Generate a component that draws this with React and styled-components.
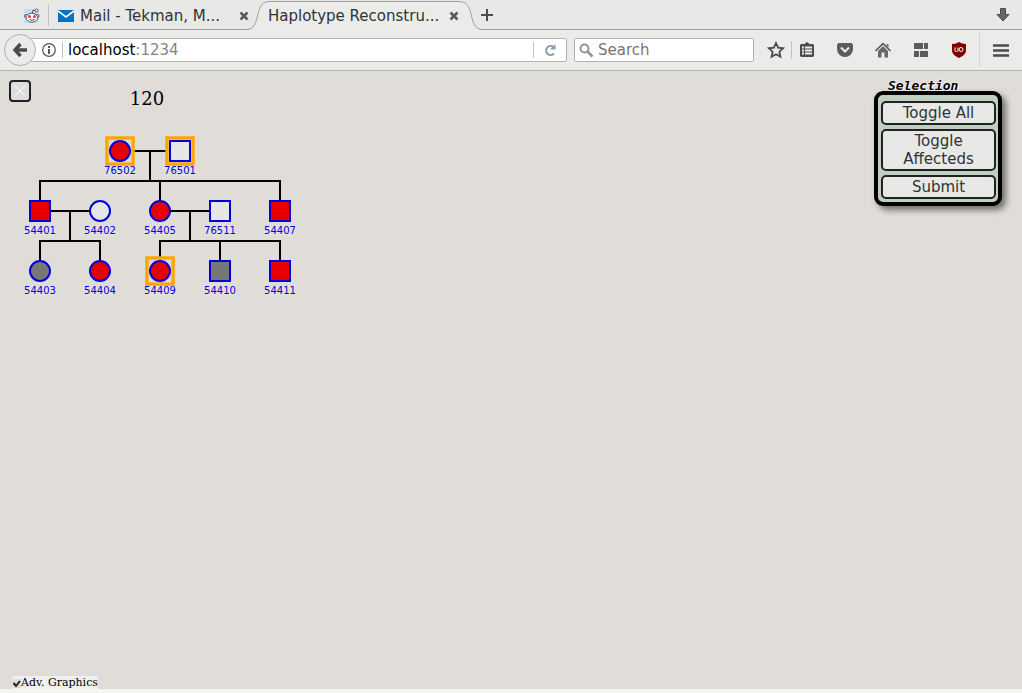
import React from "react";
import styled, { createGlobalStyle } from "styled-components";

const GlobalStyle = createGlobalStyle`
  *, *::before, *::after { box-sizing: border-box; }
  body { margin: 0; background: #e0ddd8; font-family: "DejaVu Sans", sans-serif; }
`;

const Browser = styled.div`
  display: flex;
  flex-direction: column;
  min-height: 100vh;
`;

const TabStrip = styled.header`
  display: flex;
  align-items: stretch;
  height: 30px;
  background: #e8e8e6;
  border-bottom: 1px solid #9c9f9a;
`;

const PinnedTab = styled.button`
  display: flex;
  align-items: center;
  width: 48px;
  padding: 2px 0 0 24px;
  border: 0;
  background: none;
`;

const Divider = styled.span`
  flex: none;
  align-self: center;
  width: 1px;
  height: ${(p) => p.$height || 18}px;
  background: #c4c4c1;
`;

const Tab = styled.div`
  display: flex;
  align-items: center;
  width: 208px;
  padding: 2px 8px 0 9px;
`;

const CurrentTab = styled.div`
  position: relative;
  display: flex;
  align-items: center;
  height: 30px;
  width: 210px;
  padding: 2px 8px 0 11px;
`;

const TabShape = styled.svg`
  position: absolute;
  left: -16px;
  top: 0;
`;

const TabTitle = styled.span`
  position: relative;
  flex: 1;
  font-size: 15px;
  line-height: 20px;
  white-space: nowrap;
  color: #2e3436;
`;

const TabIcon = styled.span`
  display: flex;
  width: 22px;
`;

const IconButton = styled.button`
  position: relative;
  display: flex;
  flex: none;
  align-items: center;
  justify-content: center;
  width: ${(p) => p.$width || 24}px;
  padding: 0;
  border: 0;
  background: none;
`;

const Spacer = styled.span`
  flex: 1;
`;

const Toolbar = styled.nav`
  display: flex;
  align-items: center;
  height: 41px;
  padding: 0 0 0 4px;
  background: #ebebea;
  border-bottom: 1px solid #b4b4ae;
`;

const BackButton = styled.button`
  position: relative;
  z-index: 1;
  display: flex;
  flex: none;
  align-items: center;
  justify-content: center;
  width: 32px;
  height: 32px;
  padding: 0;
  border: 1px solid #b0b0ac;
  border-radius: 50%;
  background: #ebebea;
`;

const Field = styled.div`
  display: flex;
  align-items: center;
  height: 24px;
  border: 1px solid #b4b4ae;
  border-radius: 2px;
  background: #fff;
`;

const AddressField = styled(Field)`
  flex: 1;
  margin-left: -6px;
  padding-left: 5px;
`;

const SearchField = styled(Field)`
  flex: none;
  width: 180px;
  margin: 0 7px;
  padding-left: 4px;
  gap: 4px;
`;

const Address = styled.a`
  flex: 1;
  padding-left: 5px;
  font-size: 15px;
  line-height: 20px;
  color: #858585;
  text-decoration: none;
`;

const Host = styled.span`
  color: #000;
`;

const SearchInput = styled.input`
  flex: 1;
  min-width: 0;
  padding: 0;
  border: 0;
  outline: 0;
  background: none;
  font: 15px/20px "DejaVu Sans", sans-serif;
  color: #000;
  &::placeholder { color: #757575; opacity: 1; }
`;

const Tools = styled.div`
  display: flex;
  align-items: center;
`;

const MenuSlot = styled.div`
  display: flex;
  justify-content: center;
  width: 43px;
  margin-left: 5px;
  border-left: 1px solid #d2d2cf;
  height: 34px;
`;

const Page = styled.main`
  display: flex;
  flex: 1;
  align-items: flex-start;
  padding: 9px 20px 0 9px;
`;

const CloseButton = styled.button`
  display: flex;
  flex: none;
  align-items: center;
  justify-content: center;
  width: 22px;
  height: 22px;
  padding: 0;
  border: 2px solid #222;
  border-radius: 4px;
  background: #ddd;
`;

const Chart = styled.svg`
  flex: none;
  margin-left: -31px;
  pointer-events: none;
`;

const Selection = styled.section`
  display: flex;
  flex-direction: column;
  flex: none;
  width: 128px;
  margin-left: auto;
`;

const PanelTitle = styled.h2`
  margin: 0 0 0 14px;
  font: italic bold 13px/11px "DejaVu Sans Mono", monospace;
  color: #000;
  text-shadow: 0 0 2px #fff, 1px 1px 1px #fff;
`;

const Panel = styled.div`
  display: flex;
  flex-direction: column;
  gap: 4px;
  padding: 6px 2px 3px 3px;
  border: 4px solid #000;
  border-radius: 9px;
  background: #bfcfc1;
  box-shadow: 4px 4px 6px rgba(0, 0, 0, 0.5);
`;

const PanelButton = styled.button`
  padding: 1px 8px;
  border: 2px solid #222;
  border-radius: 5px;
  background: #e8e8e6;
  font: 15px/18px "DejaVu Sans", sans-serif;
  color: #2e3436;
`;

const Footer = styled.footer`
  display: flex;
  padding: 0 12px;
  border-bottom: 4px solid #f6f4f0;
`;

const Option = styled.label`
  display: flex;
  align-items: center;
  padding-top: 1px;
  border-radius: 3px 3px 0 0;
  background: #f0f0ee;
  font: 11px/12px "DejaVu Serif", serif;
  color: #000;
`;

const Check = styled.input`
  appearance: none;
  width: 9px;
  height: 9px;
  margin: 0;
  background: #ddd;
  &:checked {
    background: #ddd url("data:image/svg+xml,%3Csvg xmlns='http://www.w3.org/2000/svg' viewBox='0 0 9 9'%3E%3Cpath d='M1.5 4l2.5 3 4-5' fill='none' stroke='%23222' stroke-width='2'/%3E%3C/svg%3E");
  }
`;

const FILL = { affected: "#e60000", unaffected: "#e6e6e6", unknown: "#777" };

const PEOPLE = [
  { id: "76502", x: 120, y: 71, sex: "f", status: "affected", picked: true },
  { id: "76501", x: 180, y: 71, sex: "m", status: "unaffected", picked: true },
  { id: "54401", x: 40, y: 131, sex: "m", status: "affected" },
  { id: "54402", x: 100, y: 131, sex: "f", status: "unaffected" },
  { id: "54405", x: 160, y: 131, sex: "f", status: "affected" },
  { id: "76511", x: 220, y: 131, sex: "m", status: "unaffected" },
  { id: "54407", x: 280, y: 131, sex: "m", status: "affected" },
  { id: "54403", x: 40, y: 191, sex: "f", status: "unknown" },
  { id: "54404", x: 100, y: 191, sex: "f", status: "affected" },
  { id: "54409", x: 160, y: 191, sex: "f", status: "affected", picked: true },
  { id: "54410", x: 220, y: 191, sex: "m", status: "unknown" },
  { id: "54411", x: 280, y: 191, sex: "m", status: "affected" },
];

const LINKS =
  "M120 71H180M150 71V101M40 131V101H280V131M160 101V131" +
  "M40 131H100M70 131V161M40 191V161H100V191" +
  "M160 131H220M190 131V161M160 191V161H280V191M220 161V191";

function Person({ id, x, y, sex, status, picked }) {
  const look = { fill: FILL[status], stroke: "#0000dd", strokeWidth: 2 };
  return (
    <g>
      {picked && (
        <>
          <rect x={x - 13} y={y - 13} width="26" height="26" fill="none" stroke="#ffa500" strokeOpacity="0.5" strokeWidth="4" />
          <rect x={x - 13} y={y - 13} width="26" height="26" fill="#e0ddd8" fillOpacity="0.6" stroke="#ffa500" strokeWidth="3" />
        </>
      )}
      {sex === "f" ? (
        <circle cx={x} cy={y} r="10" {...look} />
      ) : (
        <rect x={x - 10} y={y - 10} width="20" height="20" {...look} />
      )}
      <rect x={x - 15} y={y + 15} width="30" height="10" fill="#e5e3e0" opacity="0.6" />
      <text x={x} y={y + 23} textAnchor="middle" fontFamily="DejaVu Sans, sans-serif" fontSize="10" fill="#0000dd">
        {id}
      </text>
    </g>
  );
}

function Pedigree() {
  return (
    <Chart width="310" height="230" viewBox="0 0 310 230" role="img" aria-label="Pedigree 120">
      <text x="147" y="25" textAnchor="middle" fontFamily="DejaVu Serif, serif" fontSize="18">120</text>
      <path d={LINKS} fill="none" stroke="#000" strokeWidth="2" />
      {PEOPLE.map((p) => <Person key={p.id} {...p} />)}
    </Chart>
  );
}

const CloseIcon = () => (
  <svg width="10" height="10" viewBox="0 0 10 10">
    <path d="M1.500 1.500l7 7M8.500 1.500l-7 7" stroke="#555b5e" strokeWidth="2.600" />
  </svg>
);

const RedditIcon = () => (
  <svg width="16" height="16" viewBox="0 0 16 16">
    <rect y="1" width="15" height="14" fill="#c5dff5" />
    <path d="M8 6l1-4 3 1" fill="none" stroke="#555" />
    <circle cx="12.500" cy="2.500" r="1.500" fill="#fff" stroke="#555" />
    <circle cx="2" cy="8" r="1.500" fill="#fff" stroke="#555" />
    <circle cx="13.500" cy="8" r="1.500" fill="#fff" stroke="#555" />
    <ellipse cx="7.800" cy="9.700" rx="5.800" ry="4.500" fill="#fff" stroke="#555" />
    <circle cx="5.500" cy="8.500" r="1.500" fill="#f33" />
    <circle cx="10.500" cy="8.500" r="1.500" fill="#f33" />
    <path d="M5.500 11.500q2.500 1.500 5 0" fill="none" stroke="#444" />
  </svg>
);

const MailIcon = () => (
  <svg width="16" height="12" viewBox="0 0 16 12">
    <rect width="16" height="12" fill="#0072c6" />
    <path d="M0 1l8 6 8-6" fill="none" stroke="#fff" strokeWidth="1.600" />
  </svg>
);

export default function App() {
  return (
    <>
      <GlobalStyle />
      <Browser>
        <TabStrip>
          <PinnedTab aria-label="Reddit"><RedditIcon /></PinnedTab>
          <Divider $height={22} />
          <Tab>
            <TabIcon><MailIcon /></TabIcon>
            <TabTitle>Mail - Tekman, M...</TabTitle>
            <IconButton $width={10} aria-label="Close tab"><CloseIcon /></IconButton>
          </Tab>
          <CurrentTab>
            <TabShape width="242" height="30" viewBox="0 0 242 30">
              <path d="M5 30C14 29 15 22 17 14C19 6 21 1.500 29 1.500H217C226 1.500 228 6 230 14C232 22 233 29 241 30Z" fill="#ebebea" />
              <path d="M0 29.500H5C14 29.500 15 22 17 14C19 6 21 1.500 29 1.500H217C226 1.500 228 6 230 14C232 22 233 29.500 242 29.500" fill="none" stroke="#9ba0a3" />
            </TabShape>
            <TabTitle>Haplotype Reconstru...</TabTitle>
            <IconButton $width={10} aria-label="Close tab"><CloseIcon /></IconButton>
          </CurrentTab>
          <IconButton $width={40} aria-label="New tab">
            <svg width="12" height="12" viewBox="0 0 12 12"><path d="M6 0v12M0 6h12" stroke="#4c4c4c" strokeWidth="2" /></svg>
          </IconButton>
          <Spacer />
          <IconButton $width={38} aria-label="Downloads">
            <svg width="14" height="14" viewBox="0 0 14 14"><path d="M4.500 .5h5v6h3.500l-6 6.500-6-6.500h3.500z" fill="#666" stroke="#4c4c4c" /></svg>
          </IconButton>
        </TabStrip>
        <Toolbar>
          <BackButton aria-label="Back">
            <svg width="16" height="16" viewBox="0 0 16 16"><path d="M8.500 2L3 8l5.500 6M3 8h12" fill="none" stroke="#4c4c4c" strokeWidth="3.400" /></svg>
          </BackButton>
          <AddressField>
            <IconButton $width={26} aria-label="Site information">
              <svg width="14" height="14" viewBox="0 0 14 14"><circle cx="7" cy="7" r="6.300" fill="none" stroke="#555" strokeWidth="1.200" /><path d="M7 6v5M7 3v2" stroke="#444" strokeWidth="1.800" /></svg>
            </IconButton>
            <Divider $height={16} />
            <Address href="http://localhost:1234"><Host>localhost</Host>:1234</Address>
            <Divider $height={16} />
            <IconButton $width={32} aria-label="Reload">
              <svg width="12" height="12" viewBox="0 0 12 12"><path d="M9.500 3A4.500 4.500 0 1 0 10 9.500" fill="none" stroke="#8c9bac" strokeWidth="2" /><path d="M11.500 0v5.500H6z" fill="#8c9bac" /></svg>
            </IconButton>
          </AddressField>
          <SearchField>
            <svg width="15" height="15" viewBox="0 0 15 15"><circle cx="5.500" cy="5.500" r="4" fill="none" stroke="#959595" strokeWidth="2" /><path d="M8.500 8.500l5 5" stroke="#959595" strokeWidth="2.600" /></svg>
            <SearchInput aria-label="Search" placeholder="Search" />
          </SearchField>
          <Tools>
            <IconButton $width={30} aria-label="Bookmark">
              <svg width="18" height="18" viewBox="0 0 18 18"><path d="M9 2l2.100 4.700 5 .6-3.700 3.400 1 5L9 13.200l-4.400 2.500 1-5L1.900 7.300l5-.6z" fill="none" stroke="#4c4c4c" strokeWidth="1.800" /></svg>
            </IconButton>
            <Divider />
            <IconButton $width={30} aria-label="Bookmarks list">
              <svg width="14" height="16" viewBox="0 0 14 16"><path d="M1 2h3.500L7 0l2.500 2H13l1 1v11l-1 1H1l-1-1V3z" fill="#4c4c4c" /><path d="M2 5.500h2M5 5.500h7M2 8.500h2M5 8.500h7M2 11.500h2M5 11.500h7" stroke="#ebebea" strokeWidth="1.800" /></svg>
            </IconButton>
            <IconButton $width={45} aria-label="Pocket">
              <svg width="16" height="14" viewBox="0 0 16 14"><path d="M1.500 0h13L16 1.500V6a8 8 0 0 1-16 0V1.500z" fill="#5c5c5c" /><path d="M4 4.500l4 4 4-4" fill="none" stroke="#ebebea" strokeWidth="2" /></svg>
            </IconButton>
            <IconButton $width={31} aria-label="Home">
              <svg width="16" height="16" viewBox="0 0 16 16"><path d="M.5 9L8 1.500 15.500 9" fill="none" stroke="#4c4c4c" strokeWidth="1.500" /><path d="M3 9l5-5 5 5v6.500H9.500v-5h-3v5H3zM11.500 2h2v3.500l-2-2z" fill="#666" /></svg>
            </IconButton>
            <IconButton $width={45} aria-label="Groups">
              <svg width="14" height="14" viewBox="0 0 14 14"><path d="M0 0h9v6H0zM10 0h4v6h-4zM0 8h5v6H0zM6 8h8v6H6z" fill="#5c5c5c" /></svg>
            </IconButton>
            <IconButton $width={31} aria-label="uBlock">
              <svg width="16" height="16" viewBox="0 0 16 16"><path d="M8 0c2 1 4 2 7 2v6c0 4-3 6-7 8-4-2-7-4-7-8V2c3 0 5-1 7-2z" fill="#800000" /><path d="M4 5.500v3q0 1 1.500 1T7 8.500v-3" fill="none" stroke="#fff" /><circle cx="10" cy="7.500" r="2" fill="none" stroke="#fff" /></svg>
            </IconButton>
            <MenuSlot>
              <IconButton $width={32} aria-label="Menu">
                <svg width="16" height="13" viewBox="0 0 16 13"><path d="M0 1.500h16M0 6.500h16M0 11.500h16" stroke="#4c4c4c" strokeWidth="2.600" /></svg>
              </IconButton>
            </MenuSlot>
          </Tools>
        </Toolbar>
        <Page>
          <CloseButton aria-label="Close">
            <svg width="14" height="14" viewBox="0 0 14 14"><path d="M2 2l10 10M12 2L2 12" stroke="#fff" /></svg>
          </CloseButton>
          <Pedigree />
          <Selection>
            <PanelTitle>Selection</PanelTitle>
            <Panel>
              <PanelButton>Toggle All</PanelButton>
              <PanelButton>Toggle Affecteds</PanelButton>
              <PanelButton>Submit</PanelButton>
            </Panel>
          </Selection>
        </Page>
        <Footer>
          <Option><Check type="checkbox" defaultChecked />Adv. Graphics</Option>
        </Footer>
      </Browser>
    </>
  );
}
